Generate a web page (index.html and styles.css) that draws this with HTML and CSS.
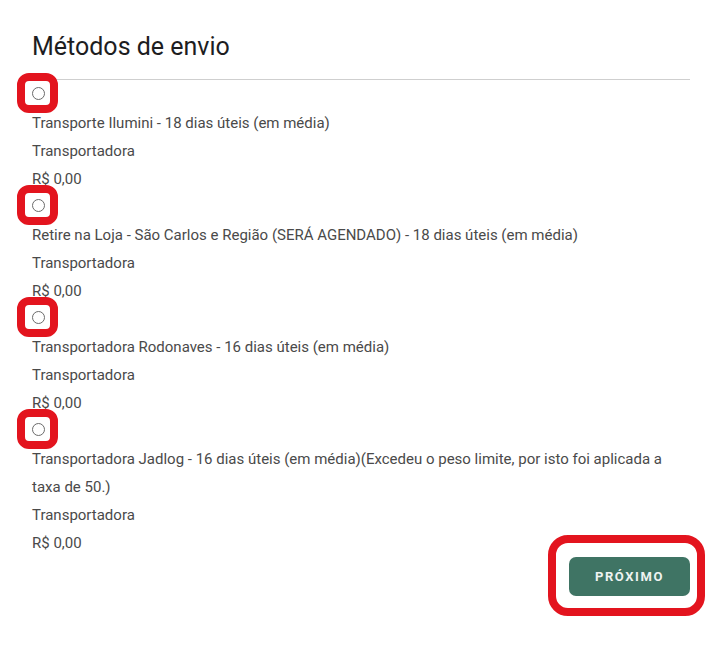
FILE: index.html
```html
<!DOCTYPE html>
<html lang="pt-BR">
<head>
<meta charset="utf-8">
<title>Métodos de envio</title>
<link rel="stylesheet" href="styles.css">
</head>
<body>
<div class="page">
  <h2 class="title">Métodos de envio</h2>
  <div class="rule"></div>
  <div class="method">
    <div class="radio-row"><span class="radio-wrap"><input type="radio" name="ship" class="radio"><span class="mark"></span></span></div>
    <div class="line">Transporte Ilumini - 18 dias úteis (em média)</div>
    <div class="line">Transportadora</div>
    <div class="line">R$ 0,00</div>
  </div>
  <div class="method">
    <div class="radio-row"><span class="radio-wrap"><input type="radio" name="ship" class="radio"><span class="mark"></span></span></div>
    <div class="line">Retire na Loja - São Carlos e Região (SERÁ AGENDADO) - 18 dias úteis (em média)</div>
    <div class="line">Transportadora</div>
    <div class="line">R$ 0,00</div>
  </div>
  <div class="method">
    <div class="radio-row"><span class="radio-wrap"><input type="radio" name="ship" class="radio"><span class="mark"></span></span></div>
    <div class="line">Transportadora Rodonaves - 16 dias úteis (em média)</div>
    <div class="line">Transportadora</div>
    <div class="line">R$ 0,00</div>
  </div>
  <div class="method">
    <div class="radio-row"><span class="radio-wrap"><input type="radio" name="ship" class="radio"><span class="mark"></span></span></div>
    <div class="line">Transportadora Jadlog - 16 dias úteis (em média)(Excedeu o peso limite, por isto foi aplicada a taxa de 50.)</div>
    <div class="line">Transportadora</div>
    <div class="line">R$ 0,00</div>
  </div>
  <div class="actions">
    <span class="btn-wrap"><button class="next">PRÓXIMO</button><span class="btn-mark"></span></span>
  </div>
</div>
</body>
</html>
```
FILE: styles.css
```css
html, body {
  margin: 0;
  padding: 0;
  background: #ffffff;
}
body {
  font-family: Roboto, "Liberation Sans", sans-serif;
}
.page {
  width: 658px;
  padding: 0 33px 57px 32px;
}
.title {
  margin: 0;
  padding-top: 29px;
  height: 40px;
  font-size: 25px;
  line-height: 35px;
  font-weight: 400;
  color: #1d1d1f;
}
.rule {
  margin-top: 10px;
  margin-bottom: 1px;
  height: 1px;
  background: #cfcfcf;
}
.method {
  color: #4a4a4a;
  font-size: 15px;
}
.radio-row {
  height: 28px;
  display: flex;
  align-items: flex-start;
}
.radio-wrap {
  position: relative;
  display: inline-block;
  width: 13px;
  height: 13px;
  margin-top: 6px;
}
.radio {
  appearance: none;
  -webkit-appearance: none;
  margin: 0;
  width: 13px;
  height: 13px;
  border: 1px solid #6b6b6b;
  border-radius: 50%;
  box-sizing: border-box;
  background: #fff;
  display: block;
}
.mark {
  position: absolute;
  left: -15px;
  top: -14px;
  width: 41px;
  height: 40px;
  box-sizing: border-box;
  border: 8px solid #e3141e;
  border-radius: 12px;
}
.line {
  line-height: 28px;
}
.actions {
  display: flex;
  justify-content: flex-end;
}
.btn-wrap {
  position: relative;
  display: block;
}
.next {
  display: block;
  width: 121px;
  height: 39px;
  border: 0;
  border-radius: 7px;
  background: #3f7464;
  color: #eef3f1;
  font-family: Roboto, "Liberation Sans", sans-serif;
  font-weight: 700;
  font-size: 13px;
  letter-spacing: 1.6px;
  padding: 0;
}
.btn-mark {
  position: absolute;
  left: -21px;
  top: -22px;
  right: -15px;
  bottom: -20px;
  box-sizing: border-box;
  border: 8px solid #e3141e;
  border-radius: 20px;
}
```
